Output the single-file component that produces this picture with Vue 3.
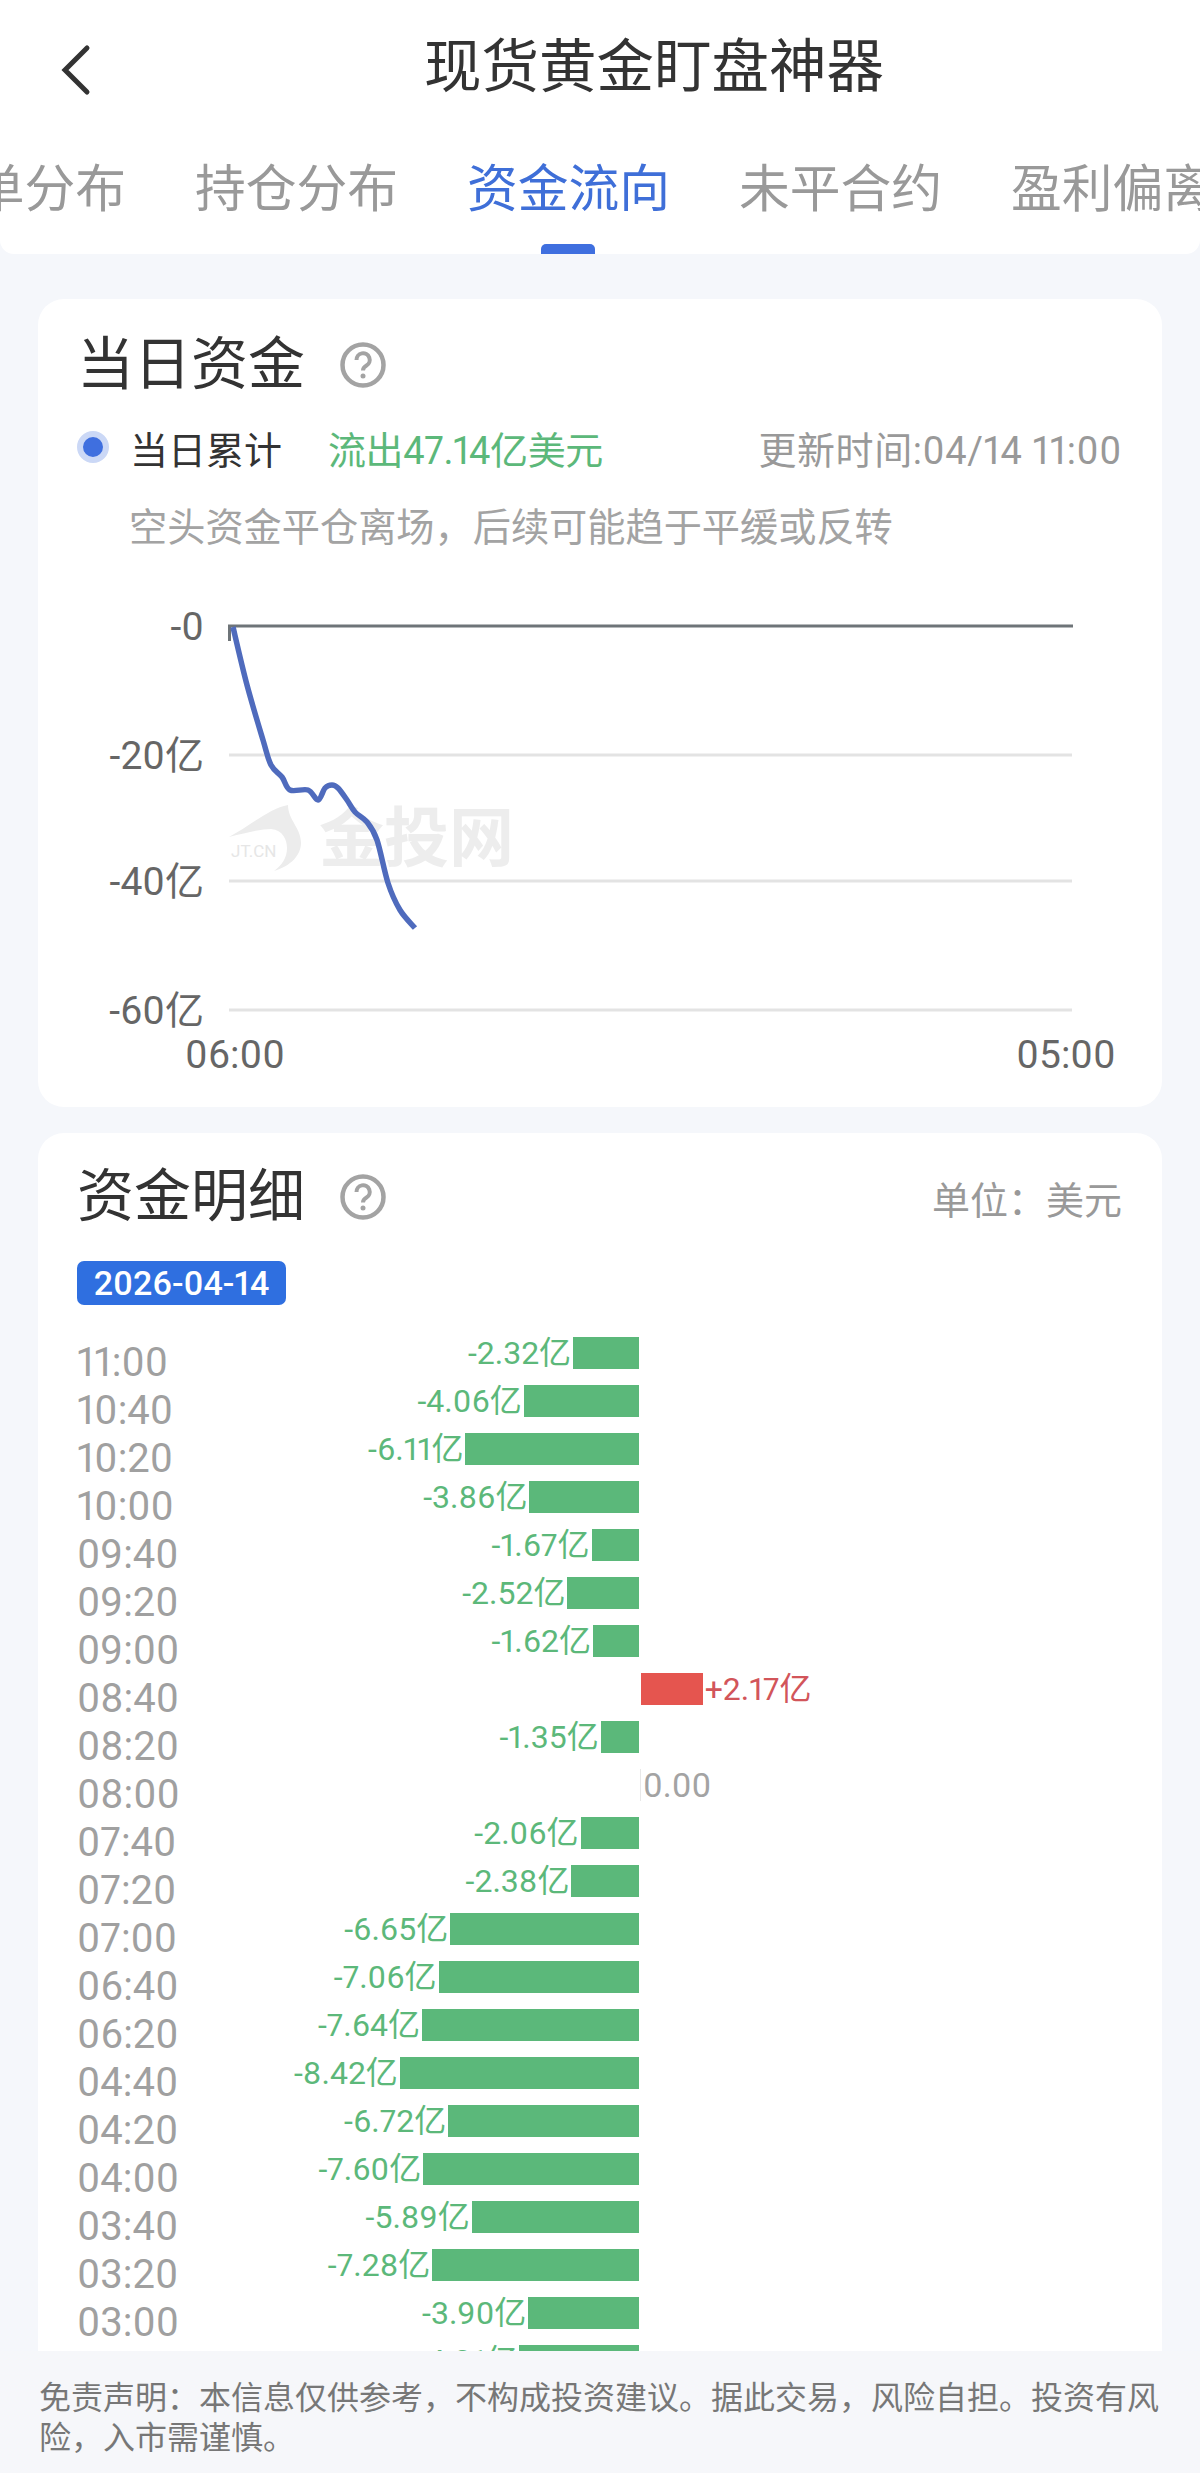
<script setup>
const tabs = ['订单分布', '持仓分布', '资金流向', '未平合约', '盈利偏离']

const rows = [
  ['11:00', -2.32], ['10:40', -4.06], ['10:20', -6.11], ['10:00', -3.86], ['09:40', -1.67],
  ['09:20', -2.52], ['09:00', -1.62], ['08:40', 2.17], ['08:20', -1.35], ['08:00', 0],
  ['07:40', -2.06], ['07:20', -2.38], ['07:00', -6.65], ['06:40', -7.06], ['06:20', -7.64],
  ['04:40', -8.42], ['04:20', -6.72], ['04:00', -7.6], ['03:40', -5.89], ['03:20', -7.28],
  ['03:00', -3.9], ['', -4.21]
].map(([time, value], index) => ({
  id: index,
  time,
  value,
  width: Math.abs(value) * 28.4 + 'px',
  label: value === 0 ? '0.00' : (value > 0 ? '+' : '-') + Math.abs(value).toFixed(2) + '亿'
}))
const times = rows.filter((r) => r.time)

const grid = [
  { y: 755, label: '-20亿' },
  { y: 881, label: '-40亿' },
  { y: 1010, label: '-60亿' }
]

const pts = [
  [233, 627], [247, 685], [263, 740], [271, 765], [282, 777], [290, 790], [308, 790],
  [318, 800], [325, 788], [332, 785], [338, 788], [347, 800], [355, 812], [367, 822],
  [377, 840], [388, 883], [400, 910], [415, 928]
]
let line = `M${pts[0][0]} ${pts[0][1]}`
for (let i = 0; i < pts.length - 1; i++) {
  const a = pts[Math.max(0, i - 1)]
  const b = pts[i]
  const c = pts[i + 1]
  const d = pts[Math.min(pts.length - 1, i + 2)]
  const c1 = [b[0] + (c[0] - a[0]) / 6, b[1] + (c[1] - a[1]) / 6]
  const c2 = [c[0] - (d[0] - b[0]) / 6, c[1] - (d[1] - b[1]) / 6]
  line += ` C${c1[0].toFixed(1)} ${c1[1].toFixed(1)} ${c2[0].toFixed(1)} ${c2[1].toFixed(1)} ${c[0]} ${c[1]}`
}
</script>

<template>
  <div class="page">
    <header class="top">
      <div class="nav">
        <svg class="back" viewBox="0 0 32 52" width="32" height="52">
          <path d="M27 4 L5 26 L27 48" fill="none" stroke="#333" stroke-width="5" stroke-linecap="round" stroke-linejoin="miter" />
        </svg>
        <h1 class="title">现货黄金盯盘神器</h1>
      </div>
      <div class="tabs">
        <span v-for="t in tabs" :key="t" class="tab" :class="{ active: t === '资金流向' }">{{ t }}</span>
      </div>
    </header>

    <main class="content">
      <section class="card card-day">
        <div class="card-head">
          <h2 class="card-title">当日资金</h2>
          <svg class="help" viewBox="0 0 46 46" width="46" height="46">
            <circle cx="23" cy="23" r="20.5" fill="none" stroke="#a3a3a3" stroke-width="4.5" />
            <path d="M16.5 18 a6.6 6.6 0 1 1 10 5.5 c-2.4 1.4 -3.5 2.4 -3.5 5" fill="none" stroke="#a3a3a3" stroke-width="4" />
            <circle cx="23" cy="34" r="2.5" fill="#a3a3a3" />
          </svg>
        </div>
        <div class="legend">
          <i class="dot"></i>
          <span class="legend-name">当日累计</span>
          <span class="legend-value">流出47.14亿美元</span>
          <span class="legend-time">更新时间:04/14 11:00</span>
        </div>
        <p class="hint">空头资金平仓离场，后续可能趋于平缓或反转</p>
        <svg class="chart" viewBox="38 570 1124 536" width="1124" height="536">
          <path d="M288 805 C270 808 250 826 229 837 C248 832 262 829 271 829 C283 830 287 840 287 848 C287 858 282 865 274 871 C291 866 301 855 301 843 C301 828 288 820 288 805 Z" fill="#ececec" />
          <text x="231" y="857" class="wm-small">JT.CN</text>
          <text x="319" y="861" class="wm-text">金投网</text>
          <line v-for="g in grid" :key="g.y" x1="229" x2="1072" :y1="g.y" :y2="g.y" stroke="#e3e3e3" stroke-width="3" />
          <path d="M229.5 641 V626 H1073" fill="none" stroke="#6e7478" stroke-width="3" />
          <text x="204" y="640" text-anchor="end" class="axis">-0</text>
          <text v-for="g in grid" :key="g.label" x="204" :y="g.y + 14" text-anchor="end" class="axis">{{ g.label }}</text>
          <text x="235" y="1068" text-anchor="middle" class="axis">06:00</text>
          <text x="1066" y="1068" text-anchor="middle" class="axis">05:00</text>
          <path :d="line" fill="none" stroke="#4f6bbd" stroke-width="5.5" stroke-linejoin="round" />
        </svg>
      </section>

      <section class="card card-detail">
        <div class="card-head">
          <h2 class="card-title">资金明细</h2>
          <svg class="help" viewBox="0 0 46 46" width="46" height="46">
            <circle cx="23" cy="23" r="20.5" fill="none" stroke="#a3a3a3" stroke-width="4.5" />
            <path d="M16.5 18 a6.6 6.6 0 1 1 10 5.5 c-2.4 1.4 -3.5 2.4 -3.5 5" fill="none" stroke="#a3a3a3" stroke-width="4" />
            <circle cx="23" cy="34" r="2.5" fill="#a3a3a3" />
          </svg>
          <span class="unit">单位：美元</span>
        </div>
        <div class="badge">2026-04-14</div>
        <div class="detail">
          <div class="times">
            <div v-for="r in times" :key="r.id" class="time">{{ r.time }}</div>
          </div>
          <div class="bars">
            <div v-for="r in rows" :key="r.id" class="row">
              <div class="neg">
                <template v-if="r.value < 0">
                  <span class="val green">{{ r.label }}</span>
                  <i class="bar bar-green" :style="{ width: r.width }"></i>
                </template>
              </div>
              <div class="pos" :class="{ zero: r.value === 0 }">
                <template v-if="r.value > 0">
                  <i class="bar bar-red" :style="{ width: r.width }"></i>
                  <span class="val red">{{ r.label }}</span>
                </template>
                <span v-else-if="r.value === 0" class="val gray">{{ r.label }}</span>
              </div>
            </div>
          </div>
        </div>
      </section>
    </main>

    <footer class="foot">免责声明：本信息仅供参考，不构成投资建议。据此交易，风险自担。投资有风险，入市需谨慎。</footer>
  </div>
</template>

<style scoped>
.page {
  width: 1200px;
  height: 2473px;
  display: flex;
  flex-direction: column;
  overflow: hidden;
  background: #f5f7fb;
  font-family: Roboto, "Noto Sans CJK SC", sans-serif;
  font-variant-numeric: proportional-nums;
  color: #333;
}
.top {
  flex: none;
  height: 254px;
  background: #fff;
  border-radius: 0 0 14px 14px;
  overflow: hidden;
}
.nav {
  height: 136px;
  position: relative;
  display: flex;
  align-items: center;
  justify-content: center;
  padding-left: 108px;
}
.back {
  position: absolute;
  left: 60px;
  top: 44px;
}
.title {
  margin: 0;
  font-size: 57.5px;
  font-weight: 400;
  line-height: 80px;
  color: #333;
}
.tabs {
  display: flex;
  gap: 69px;
  margin-left: -77px;
  white-space: nowrap;
}
.tab {
  flex: none;
  position: relative;
  height: 118px;
  padding-top: 24px;
  box-sizing: border-box;
  font-size: 50.75px;
  line-height: 60px;
  color: #999;
}
.tab.active {
  color: #3f6fd8;
}
.tab.active::after {
  content: "";
  position: absolute;
  left: 74px;
  bottom: 0;
  width: 54px;
  height: 10px;
  border-radius: 5px 5px 0 0;
  background: #3f6fdf;
}
.content {
  flex: 1;
  min-height: 0;
  overflow: hidden;
  padding: 45px 38px 0;
}
.card {
  background: #fff;
  border-radius: 26px;
  padding: 0 40px;
}
.card-day {
  height: 808px;
  margin-bottom: 26px;
  padding-top: 26px;
  box-sizing: border-box;
}
.card-detail {
  padding-top: 24px;
  border-radius: 26px 26px 0 0;
}
.card-head {
  display: flex;
  align-items: center;
  height: 80px;
}
.card-title {
  margin: 0 0 0 -1px;
  font-size: 57px;
  font-weight: 400;
  line-height: 80px;
  color: #333;
}
.help {
  margin-left: 35px;
  flex: none;
}
.unit {
  margin-left: auto;
  font-size: 38px;
  color: #999;
}
.legend {
  margin-top: 17px;
  height: 50px;
  display: flex;
  align-items: center;
  font-size: 38px;
}
.dot {
  width: 20px;
  height: 20px;
  border-radius: 50%;
  background: #3f6fdf;
  border: 6px solid #cbd8f6;
  margin-left: -1px;
  flex: none;
}
.legend-name {
  margin-left: 21px;
  color: #333;
}
.legend-value {
  margin-left: 46px;
  color: #5cb87a;
  letter-spacing: -0.4px;
}
.legend-time {
  margin-left: auto;
  color: #999;
  letter-spacing: 0.6px;
}
.hint {
  margin: 31px 0 0 51px;
  font-size: 38.2px;
  line-height: 50px;
  color: #a3a3a3;
}
.chart {
  display: block;
  margin: 17px 0 0 -40px;
}
.axis {
  font-size: 39px;
  fill: #666;
}
.wm-text {
  font-size: 65px;
  font-weight: 700;
  fill: #ededed;
}
.wm-small {
  font-size: 17px;
  fill: #e6e6e6;
}
.badge {
  margin-top: 24px;
  width: 209px;
  height: 44px;
  margin-left: -1px;
  border-radius: 7px;
  background: #2f6fe0;
  color: #fff;
  font-size: 34px;
  font-weight: 500;
  line-height: 44px;
  text-align: center;
}
.detail {
  display: flex;
  margin-top: 32px;
}
.times {
  flex: none;
  width: 199px;
  margin-top: 2px;
  margin-left: -1px;
  margin-right: 1px;
}
.time {
  height: 48px;
  font-size: 40px;
  line-height: 48px;
  color: #a0a0a0;
}
.bars {
  flex: 1;
  min-width: 0;
}
.row {
  height: 48px;
  display: flex;
  align-items: flex-start;
}
.neg {
  flex: none;
  width: 362px;
  height: 32px;
  display: flex;
  justify-content: flex-end;
  align-items: center;
  gap: 2px;
}
.pos {
  flex: 1;
  height: 32px;
  margin-left: 2px;
  display: flex;
  align-items: center;
  gap: 2px;
}
.pos.zero {
  border-left: 1px solid #e8e8e8;
  margin-left: 1px;
  padding-left: 2px;
}
.bar {
  display: block;
  height: 32px;
  flex: none;
}
.bar-green {
  background: #5bb87a;
}
.bar-red {
  background: #e5554f;
}
.val {
  font-size: 32px;
  line-height: 32px;
  white-space: nowrap;
}
.green {
  color: #5cb87a;
}
.red {
  color: #d2555a;
}
.gray {
  font-size: 34px;
  color: #a3a3a3;
}
.foot {
  flex: none;
  height: 122px;
  box-sizing: border-box;
  padding: 27px 38px 0 39px;
  background: #f6f7fa;
  font-size: 32px;
  line-height: 40px;
  color: #777;
}
</style>
